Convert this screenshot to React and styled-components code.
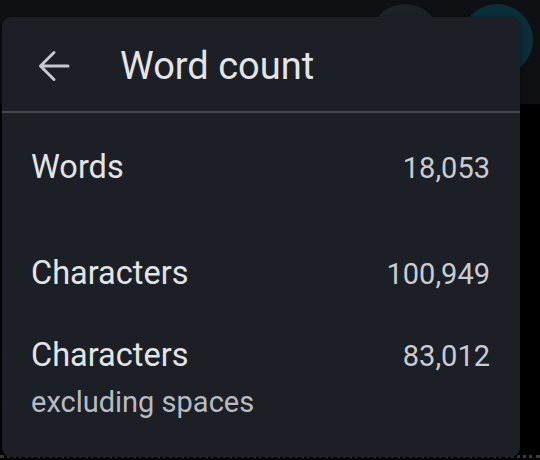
import React from 'react';
import styled, { createGlobalStyle } from 'styled-components';

const GlobalStyle = createGlobalStyle`
  html, body {
    margin: 0;
    padding: 0;
    background: #000;
  }
  body {
    font-family: Roboto, "Noto Sans", "Liberation Sans", sans-serif;
  }
`;

const Page = styled.div`
  position: relative;
  width: 540px;
  height: 460px;
  overflow: hidden;
  background: #000;
`;

const TopBar = styled.div`
  height: 104px;
  box-sizing: border-box;
  padding: 4px 7px 0 0;
  display: flex;
  justify-content: flex-end;
  align-items: flex-start;
  gap: 20px;
  background: #0e1013;
`;

const Avatar = styled.div`
  width: 72px;
  height: 72px;
  border-radius: 50%;
  background: ${(p) => p.color};
`;

const Backdrop = styled.div`
  position: absolute;
  left: 0;
  right: 0;
  bottom: -3px;
  height: 5px;
  border-top: 3px dotted #3a3d42;
`;

const Panel = styled.div`
  position: absolute;
  left: 2px;
  top: 17px;
  width: 518px;
  height: 440px;
  background: #1c1f26;
  border-radius: 9px;
  box-shadow: 0 2px 6px rgba(0, 0, 0, 0.5);
  display: flex;
  flex-direction: column;
`;

const Header = styled.div`
  height: 96px;
  box-sizing: border-box;
  padding: 4px 0 0 36px;
  display: flex;
  align-items: center;
  gap: 50px;
  border-bottom: 2px solid #45484d;
`;

const BackButton = styled.button`
  width: 32px;
  height: 32px;
  padding: 0;
  border: none;
  background: none;
  display: flex;
  align-items: center;
  justify-content: center;
  cursor: pointer;
`;

const Title = styled.h1`
  margin: 0;
  font-size: 38px;
  line-height: 48px;
  font-weight: 400;
  color: #e4e5e8;
`;

const List = styled.div`
  padding: 34px 30px 0 29px;
  display: flex;
  flex-direction: column;
`;

const Row = styled.div`
  display: flex;
  justify-content: space-between;
  align-items: baseline;
  margin-bottom: ${(p) => p.space}px;
`;

const LabelBox = styled.div`
  display: flex;
  flex-direction: column;
`;

const Label = styled.span`
  font-size: 32.5px;
  line-height: 40px;
  color: #e3e4e7;
`;

const Sub = styled.span`
  margin-top: 9px;
  font-size: 29px;
  line-height: 36px;
  color: #b7bbc3;
`;

const Value = styled.span`
  font-size: 29px;
  line-height: 40px;
  color: #c9ccd1;
`;

const stats = [
  { label: 'Words', value: '18,053', space: 65 },
  { label: 'Characters', value: '100,949', space: 41 },
  { label: 'Characters', sub: 'excluding spaces', value: '83,012', space: 0 },
];

export default function App() {
  return (
    <Page>
      <GlobalStyle />
      <TopBar>
        <Avatar color="#1d2227" />
        <Avatar color="#0b2e3b" />
      </TopBar>
      <Backdrop />
      <Panel>
        <Header>
          <BackButton aria-label="Back">
            <svg width="32" height="32" viewBox="0 0 32 32" fill="none">
              <path
                d="M30 16H3M16 2.5L2.5 16L16 29.5"
                stroke="#c6c9ce"
                strokeWidth="3"
                strokeLinecap="round"
                strokeLinejoin="round"
              />
            </svg>
          </BackButton>
          <Title>Word count</Title>
        </Header>
        <List>
          {stats.map((s, i) => (
            <Row key={i} space={s.space}>
              <LabelBox>
                <Label>{s.label}</Label>
                {s.sub && <Sub>{s.sub}</Sub>}
              </LabelBox>
              <Value>{s.value}</Value>
            </Row>
          ))}
        </List>
      </Panel>
    </Page>
  );
}
